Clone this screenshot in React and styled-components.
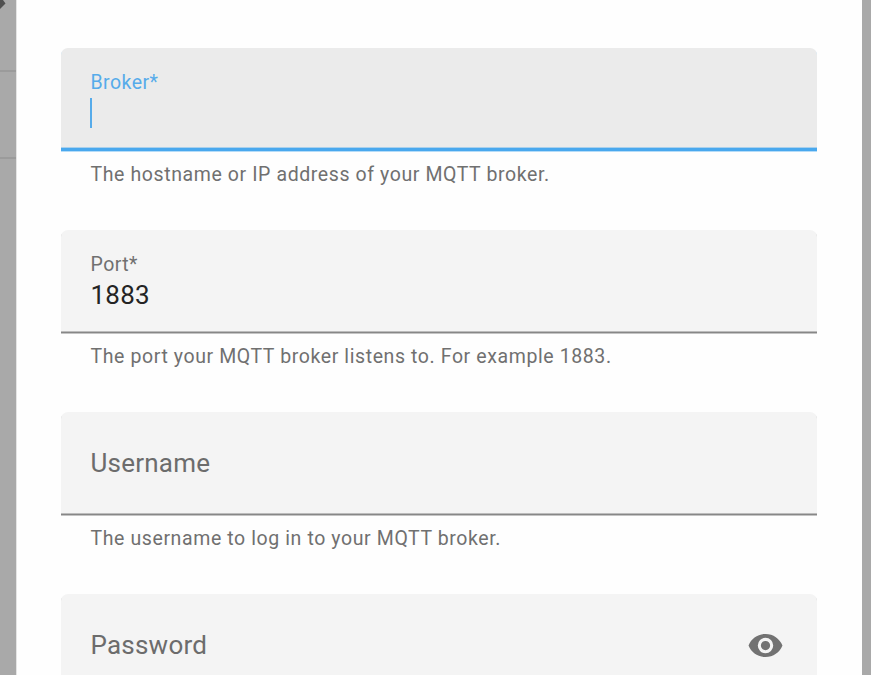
import React from "react";
import styled, { createGlobalStyle } from "styled-components";

const GlobalStyle = createGlobalStyle`
  * {
    box-sizing: border-box;
  }
  body {
    margin: 0;
    overflow: hidden;
    background-color: #a9a9a9;
    font-family: Roboto, sans-serif;
  }
`;

const StyledPage = styled.div`
  display: grid;
  grid-template-columns: 17px 845px 9px;
  height: 675px;
  overflow: hidden;
`;

const StyledBackdrop = styled.div`
  overflow: hidden;
  background-color: #a9a9a9;
`;

const StyledRow = styled.div`
  height: ${(props) => props.$height}px;
  border-bottom: 2px solid #9b9b9b;
`;

const StyledArrow = styled.svg`
  display: block;
  width: 6px;
  height: 10px;
`;

const StyledDialog = styled.form`
  height: 675px;
  padding: 48px 45px 0 44px;
  overflow: hidden;
  background-color: #fefefe;
  border-left: 1px solid #e4e4e4;
  margin-left: -1px;
`;

const StyledField = styled.div`
  height: 182px;
`;

const StyledBox = styled.label`
  display: flex;
  align-items: center;
  justify-content: space-between;
  height: 103px;
  padding: 0 33px 0 29.5px;
  border-radius: 7px 7px 0 0;
  background-color: ${(props) => (props.$focused ? "#ebebeb" : "#f4f4f4")};
  border-bottom: ${(props) =>
    props.$focused ? "3px solid #49a8ee" : "1px solid #878787"};
  box-shadow: 0 1px 0 ${(props) => (props.$focused ? "#b5dcf8" : "#c4c4c4")},
    inset 0 -1px 0 ${(props) => (props.$focused ? "#a9d0ec" : "#bcbcbc")};
`;

const StyledContent = styled.div`
  height: 100%;
  padding-top: 23px;
`;

const StyledLabel = styled.div`
  font-size: 19.5px;
  line-height: 24px;
  letter-spacing: 0.45px;
  color: ${(props) => (props.$focused ? "#56abea" : "#707070")};
`;

const StyledPlaceholder = styled.span`
  font-size: 26px;
  line-height: 32px;
  letter-spacing: 0.22px;
  color: #6c6c6c;
`;

const StyledValue = styled.div`
  padding-top: 2px;
  font-size: 26px;
  line-height: 32px;
  letter-spacing: 0.22px;
  color: #242424;
`;

const StyledCaret = styled.div`
  width: 2px;
  height: 30px;
  margin-top: 3px;
  margin-left: -0.2px;
  background-color: #56abea;
`;

const StyledHelper = styled.p`
  margin: 0;
  padding: 12px 29.5px 0;
  font-size: 19.5px;
  line-height: 24px;
  letter-spacing: 0.6px;
  color: #707070;
`;

const StyledEye = styled.svg`
  width: 37px;
  height: 37px;
  margin-top: 1px;
  fill: #727272;
`;

const Field = ({ label, value, helper, focused, icon }) => {
  const raised = focused || value;
  return (
    <StyledField>
      <StyledBox $focused={focused}>
        {raised ? (
          <StyledContent>
            <StyledLabel $focused={focused}>{label}</StyledLabel>
            {focused ? <StyledCaret /> : <StyledValue>{value}</StyledValue>}
          </StyledContent>
        ) : (
          <StyledPlaceholder>{label}</StyledPlaceholder>
        )}
        {icon}
      </StyledBox>
      {helper && <StyledHelper>{helper}</StyledHelper>}
    </StyledField>
  );
};

const EyeIcon = () => (
  <StyledEye viewBox="0 0 24 24">
    <path d="M12 9a3 3 0 0 0-3 3 3 3 0 0 0 3 3 3 3 0 0 0 3-3 3 3 0 0 0-3-3m0 8a5 5 0 0 1-5-5 5 5 0 0 1 5-5 5 5 0 0 1 5 5 5 5 0 0 1-5 5m0-12.5C7 4.5 2.73 7.61 1 12c1.73 4.39 6 7.5 11 7.5s9.27-3.11 11-7.5c-1.73-4.39-6-7.5-11-7.5z" />
  </StyledEye>
);

const App = () => {
  return (
    <>
      <GlobalStyle />
      <StyledPage>
        <StyledBackdrop>
          <StyledRow $height={72}>
            <StyledArrow viewBox="0 0 6 10">
              <path d="M0 0H3L5.5 3.5L0 9Z" fill="#505050" />
            </StyledArrow>
          </StyledRow>
          <StyledRow $height={87} />
        </StyledBackdrop>
        <StyledDialog>
          <Field
            label="Broker*"
            helper="The hostname or IP address of your MQTT broker."
            focused
          />
          <Field
            label="Port*"
            value="1883"
            helper="The port your MQTT broker listens to. For example 1883."
          />
          <Field
            label="Username"
            helper="The username to log in to your MQTT broker."
          />
          <Field label="Password" icon={<EyeIcon />} />
        </StyledDialog>
        <StyledBackdrop />
      </StyledPage>
    </>
  );
};

export default App;
